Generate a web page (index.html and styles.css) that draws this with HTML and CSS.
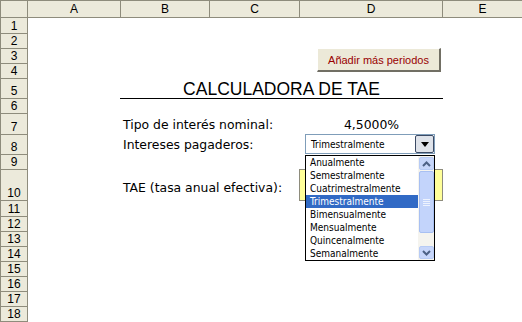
FILE: index.html
```html
<!DOCTYPE html>
<html lang="es">
<head>
  <meta charset="UTF-8">
  <title>Calculadora de TAE</title>
  <link rel="stylesheet" href="styles.css">
</head>
<body>
  <div class="sheet">
    <div class="corner"></div>
    <div class="colhead ca">A</div>
    <div class="colhead cb">B</div>
    <div class="colhead cc">C</div>
    <div class="colhead cd">D</div>
    <div class="colhead ce">E</div>

    <div class="rowhead r1">1</div>
    <div class="rowhead r2">2</div>
    <div class="rowhead r3">3</div>
    <div class="rowhead r4">4</div>
    <div class="rowhead r5">5</div>
    <div class="rowhead r6">6</div>
    <div class="rowhead r7">7</div>
    <div class="rowhead r8">8</div>
    <div class="rowhead r9">9</div>
    <div class="rowhead r10">10</div>
    <div class="rowhead r11">11</div>
    <div class="rowhead r12">12</div>
    <div class="rowhead r13">13</div>
    <div class="rowhead r14">14</div>
    <div class="rowhead r15">15</div>
    <div class="rowhead r16">16</div>
    <div class="rowhead r17">17</div>
    <div class="rowhead r18">18</div>

    <div class="title">CALCULADORA DE TAE</div>
    <div class="cell label r7">Tipo de interés nominal:</div>
    <div class="cell value r7">4,5000%</div>
    <div class="cell label r8">Intereses pagaderos:</div>
    <div class="cell label r10">TAE (tasa anual efectiva):</div>
    <div class="result"></div>

    <!-- controles de formulario flotando sobre la hoja -->
    <div class="btn-add">Añadir más periodos</div>

    <div class="combo">
      <span class="combo-text">Trimestralmente</span>
      <span class="combo-btn"><span class="arrow"></span></span>
    </div>

    <div class="listbox">
      <ul class="options">
        <li>Anualmente</li>
        <li>Semestralmente</li>
        <li>Cuatrimestralmente</li>
        <li class="selected">Trimestralmente</li>
        <li>Bimensualmente</li>
        <li>Mensualmente</li>
        <li>Quincenalmente</li>
        <li>Semanalmente</li>
      </ul>
      <div class="scrollbar">
        <div class="sb-btn">
          <svg width="9" height="6" viewBox="0 0 9 6"><path d="M1 5 L4.5 1.5 L8 5" fill="none" stroke="#4d6185" stroke-width="2"/></svg>
        </div>
        <div class="sb-thumb"><span></span><span></span><span></span><span></span></div>
        <div class="sb-track"></div>
        <div class="sb-btn">
          <svg width="9" height="6" viewBox="0 0 9 6"><path d="M1 1 L4.5 4.5 L8 1" fill="none" stroke="#4d6185" stroke-width="2"/></svg>
        </div>
      </div>
    </div>
  </div>
</body>
</html>
```

FILE: styles.css
```css
* {
  margin: 0;
  padding: 0;
  box-sizing: border-box;
  list-style-type: none;
}

html, body {
  background-color: white;
}

.sheet {
  position: relative;
  display: grid;
  grid-template-columns: 27px 93px 89px 90px 143px 1fr;
  grid-template-rows: 17px 16px 15px 15px 15px 20px 15px 21px 20px 15px 31px 16px 15px 15px 15px 15px 15px 15px 15px;
  width: 522px;
  height: 322px;
  border-top: 1px solid #8e8c7c;
  border-left: 1px solid #8e8c7c;
  font-family: "DejaVu Sans", Verdana, sans-serif;
  overflow: hidden;
}

.corner, .colhead, .rowhead {
  background-color: #eceadb;
  border-right: 1px solid #8e8c7c;
  border-bottom: 1px solid #8e8c7c;
  font-family: "Liberation Sans", Arial, sans-serif;
  font-size: 12px;
  color: black;
  display: flex;
  justify-content: center;
}

.corner {
  grid-row: 1;
  grid-column: 1;
}

.colhead {
  align-items: center;
  grid-row: 1;
}

.ca { grid-column: 2; }
.cb { grid-column: 3; }
.cc { grid-column: 4; }
.cd { grid-column: 5; }
.ce { grid-column: 6; border-right: none; }

.rowhead {
  grid-column: 1;
  align-items: flex-end;
  line-height: 14px;
}

.r1 { grid-row: 2; }
.r2 { grid-row: 3; }
.r3 { grid-row: 4; }
.r4 { grid-row: 5; }
.r5 { grid-row: 6; }
.r6 { grid-row: 7; }
.r7 { grid-row: 8; }
.r8 { grid-row: 9; }
.r9 { grid-row: 10; }
.r10 { grid-row: 11; }
.r11 { grid-row: 12; }
.r12 { grid-row: 13; }
.r13 { grid-row: 14; }
.r14 { grid-row: 15; }
.r15 { grid-row: 16; }
.r16 { grid-row: 17; }
.r17 { grid-row: 18; }
.r18 { grid-row: 19; }

.title {
  grid-row: 6;
  grid-column: 3 / 6;
  margin-left: -1px;
  border-bottom: 1px solid black;
  font-family: "Liberation Sans", Arial, sans-serif;
  font-size: 17.5px;
  line-height: 17px;
  text-align: center;
  padding-top: 2px;
}

.cell {
  display: flex;
  align-items: flex-end;
  font-size: 12.4px;
  line-height: 15px;
  padding-bottom: 3px;
  white-space: nowrap;
}

.label {
  grid-column: 3 / 5;
  padding-left: 2px;
}

.value {
  grid-column: 5;
  justify-content: center;
}

.cell.r10 {
  padding-bottom: 6px;
}

.result {
  grid-row: 11;
  grid-column: 5;
  margin: -1px 0 0 -1px;
  background-color: #ffff99;
  border: 1px solid #8e8c7c;
}

.btn-add {
  position: absolute;
  left: 316px;
  top: 47px;
  width: 124px;
  height: 24px;
  background-color: #ece9d8;
  border-top: 1px solid white;
  border-left: 1px solid white;
  border-right: 2px solid #716f64;
  border-bottom: 2px solid #716f64;
  color: #990000;
  font-family: "Liberation Sans", Arial, sans-serif;
  font-size: 11px;
  display: flex;
  align-items: center;
  justify-content: center;
}

.combo {
  position: absolute;
  left: 304px;
  top: 133px;
  width: 130px;
  height: 20px;
  border: 1px solid #7f9db9;
  background-color: white;
  display: flex;
  align-items: center;
  font-family: "DejaVu Sans Condensed", "DejaVu Sans", sans-serif;
  font-size: 10px;
}

.combo-text {
  flex: 1;
  padding-left: 5px;
}

.combo-btn {
  width: 19px;
  height: 18px;
  border: 1px solid #3c4a64;
  border-radius: 2px;
  background-color: #dfe3ea;
  display: flex;
  align-items: center;
  justify-content: center;
}

.combo-btn .arrow {
  width: 0;
  height: 0;
  border-left: 4px solid transparent;
  border-right: 4px solid transparent;
  border-top: 5px solid black;
}

.listbox {
  position: absolute;
  left: 304px;
  top: 154px;
  width: 130px;
  height: 106px;
  border: 1px solid black;
  background-color: white;
  display: flex;
  font-family: "DejaVu Sans Condensed", "DejaVu Sans", sans-serif;
  font-size: 10px;
}

.options {
  flex: 1;
}

.options li {
  height: 13px;
  line-height: 13px;
  padding-left: 4px;
  white-space: nowrap;
}

.options li.selected {
  background-color: #316ac5;
  color: white;
}

.scrollbar {
  width: 16px;
  display: flex;
  flex-direction: column;
  background-color: #f5f4ef;
  padding: 1px 0 1px 1px;
}

.sb-btn {
  height: 13px;
  border: 1px solid #b7cbf5;
  border-radius: 2px;
  background-color: #c7d6fa;
  display: flex;
  align-items: center;
  justify-content: center;
}

.sb-thumb {
  height: 62px;
  margin-top: 1px;
  border: 1px solid #a8c0f2;
  border-radius: 2px;
  background-color: #c3d4fb;
  display: flex;
  flex-direction: column;
  align-items: center;
  justify-content: center;
  gap: 1px;
}

.sb-thumb span {
  width: 7px;
  height: 1px;
  background-color: #eef3fe;
}

.sb-track {
  flex: 1;
}
```
